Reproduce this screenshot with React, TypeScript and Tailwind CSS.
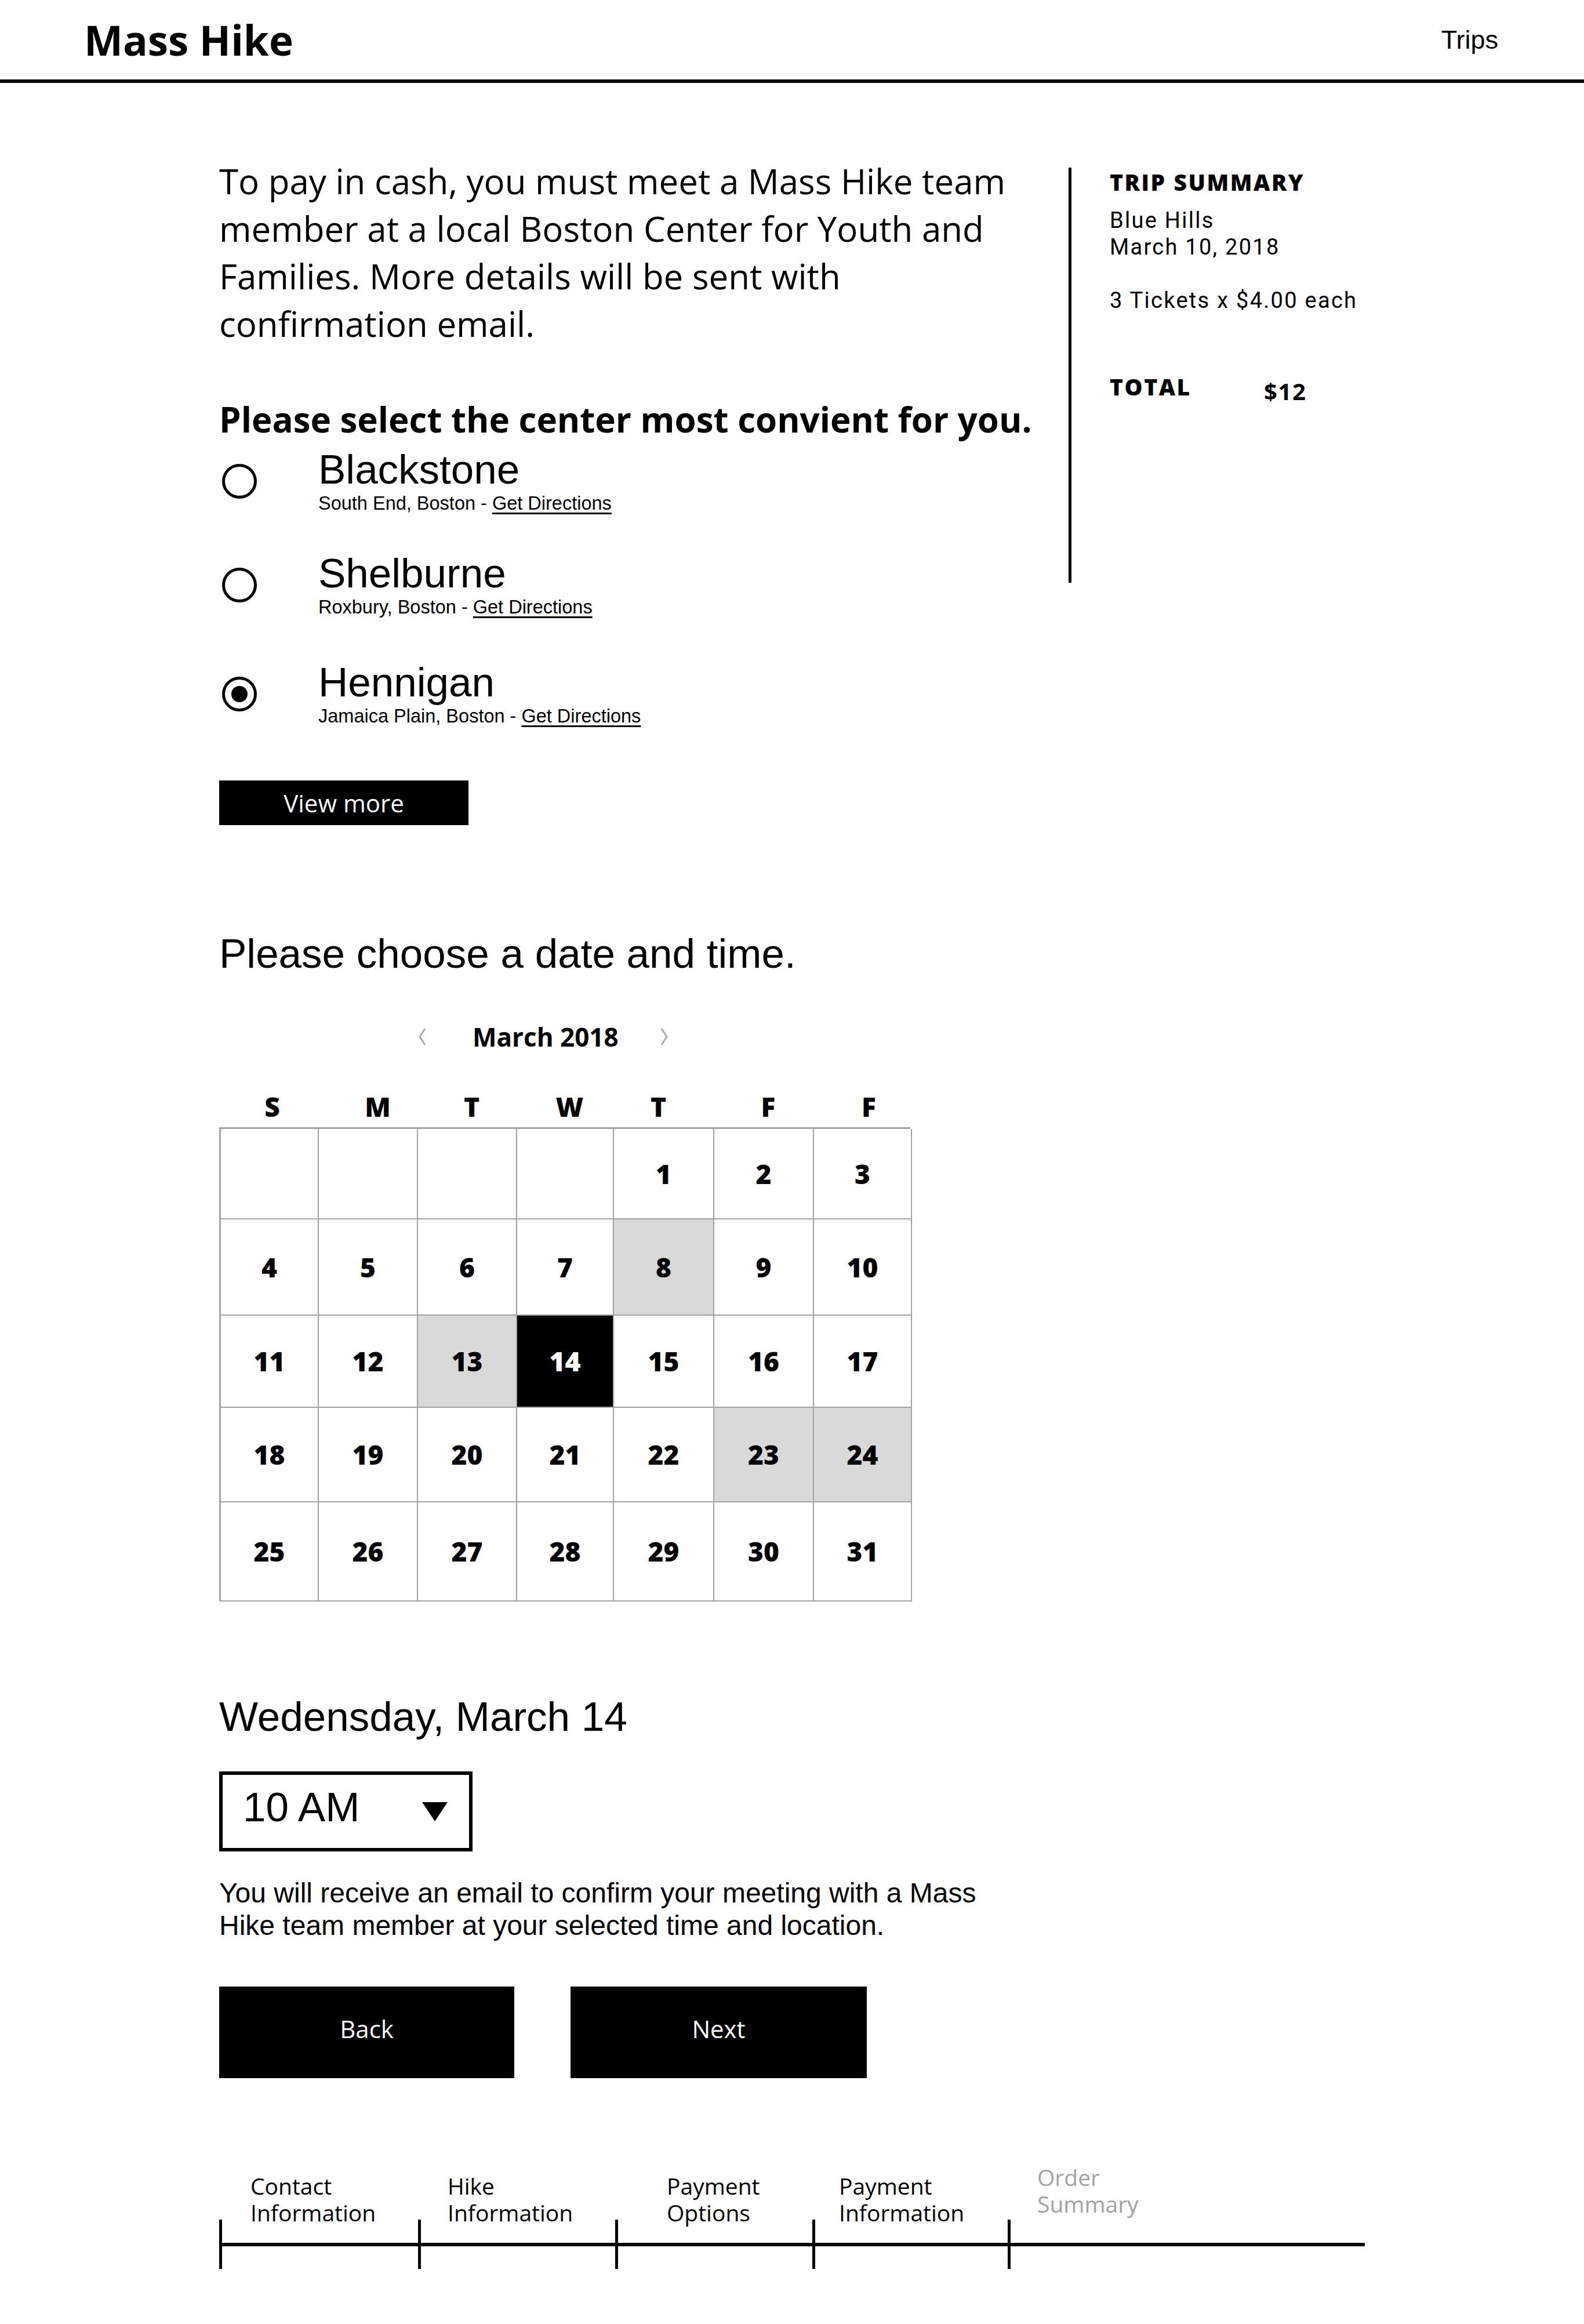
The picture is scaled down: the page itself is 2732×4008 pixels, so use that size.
import React from "react";

const days: (number | null)[] = [
  null, null, null, null, 1, 2, 3,
  4, 5, 6, 7, 8, 9, 10,
  11, 12, 13, 14, 15, 16, 17,
  18, 19, 20, 21, 22, 23, 24,
  25, 26, 27, 28, 29, 30, 31,
];

const gray = new Set([8, 13, 23, 24]);
const rowHeights = ["h-[156px]", "h-[166px]", "h-[159px]", "h-[163px]", "h-[171px]"];
const weekdayPad = ["pl-[14px]", "pl-[38px]", "pl-[20px]", "pl-[20px]", "pr-[14px]", "pl-[20px]", "pl-[26px]"];

function Radio({ checked }: { checked?: boolean }) {
  return (
    <span className="ml-[5px] flex size-[60px] shrink-0 items-center justify-center rounded-full border-[5px] border-black">
      {checked && <span className="size-[28px] rounded-full bg-black" />}
    </span>
  );
}

function Center({
  name,
  area,
  checked,
  className,
}: {
  name: string;
  area: string;
  checked?: boolean;
  className?: string;
}) {
  return (
    <div className={"flex items-center " + (className ?? "")}>
      <Radio checked={checked} />
      <div className="ml-[106px] font-['Liberation_Sans',Arial,sans-serif]">
        <div className="text-[71px] leading-[76px]">{name}</div>
        <div className="text-[32.5px] leading-[40px]">
          {area} - <span className="underline underline-offset-[5px]">Get Directions</span>
        </div>
      </div>
    </div>
  );
}

function Chevron({ dir }: { dir: "left" | "right" }) {
  return (
    <svg width="14" height="32" viewBox="0 0 14 32" fill="none">
      {dir === "left" ? (
        <polyline points="12,2 3,16 12,30" stroke="#acacac" strokeWidth="3" />
      ) : (
        <polyline points="2,2 11,16 2,30" stroke="#acacac" strokeWidth="3" />
      )}
    </svg>
  );
}

function Step({
  label1,
  label2,
  width,
  pad,
  muted,
}: {
  label1: string;
  label2: string;
  width: string;
  pad: string;
  muted?: boolean;
}) {
  return (
    <div className={"flex flex-col justify-end " + width}>
      <div
        className={
          "font-['Open_Sans',sans-serif] text-[39px] leading-[46px] " +
          pad +
          (muted ? " text-[#a3a3a3]" : " text-black")
        }
      >
        <div>{label1}</div>
        <div>{label2}</div>
      </div>
      <div className="-mt-[11px] flex h-[85px] items-center border-l-[5px] border-black">
        <div className="h-[6px] w-full bg-black" />
      </div>
    </div>
  );
}

export default function App() {
  return (
    <div className="min-h-[4008px] w-[2732px] bg-white text-black">
      <header className="flex h-[143px] items-center justify-between border-b-[6px] border-black pl-[145px] pr-[148px]">
        <div className="font-['Open_Sans',sans-serif] text-[71px] font-bold leading-none">Mass Hike</div>
        <div className="font-['Liberation_Sans',Arial,sans-serif] text-[45px] leading-none">Trips</div>
      </header>

      <main className="flex pl-[378px]">
        <div className="w-[1465px] pt-[128px]">
          <p className="w-[1410px] font-['Open_Sans',sans-serif] text-[60px] leading-[82px]">
            To pay in cash, you must meet a Mass Hike team member at a local Boston Center for Youth and
            Families. More details will be sent with confirmation email.
          </p>
          <h2 className="mt-[84px] whitespace-nowrap font-['Open_Sans',sans-serif] text-[60px] font-bold leading-[80px]">
            Please select the center most convient for you.
          </h2>

          <Center className="mt-[9px]" name="Blackstone" area="South End, Boston" />
          <Center className="mt-[63px]" name="Shelburne" area="Roxbury, Boston" />
          <Center className="mt-[72px]" name="Hennigan" area="Jamaica Plain, Boston" checked />

          <button className="mt-[91px] flex h-[77px] w-[430px] items-center justify-center bg-black font-['Open_Sans',sans-serif] text-[42px] text-white">
            View more
          </button>

          <h2 className="mt-[182px] font-['Liberation_Sans',Arial,sans-serif] text-[71px] leading-[80px]">
            Please choose a date and time.
          </h2>

          <div className="mt-[73px] flex h-[60px] items-center">
            <div className="ml-[343px]">
              <Chevron dir="left" />
            </div>
            <div className="ml-[80px] font-['Open_Sans',sans-serif] text-[44px] font-bold">March 2018</div>
            <div className="ml-[72px]">
              <Chevron dir="right" />
            </div>
          </div>

          <div className="mt-[60px] grid w-[1192px] grid-cols-[169px_171px_171px_167px_173px_172px_169px] text-center font-['Open_Sans',sans-serif] text-[46px] font-extrabold leading-[60px]">
            {["S", "M", "T", "W", "T", "F", "F"].map((d, i) => (
              <div key={i} className={weekdayPad[i]}>
                {d}
              </div>
            ))}
          </div>

          <div className="mt-[6px] grid w-[1192px] grid-cols-[169px_171px_171px_167px_173px_172px_169px] border-l-[3px] border-t-[3px] border-[#a3a3a3]">
            {days.map((d, i) => {
              const isSel = d === 14;
              const isGray = d !== null && gray.has(d);
              return (
                <div
                  key={i}
                  className={
                    "flex items-center justify-center border-b-[2px] border-r-[2px] border-[#a3a3a3] font-['Open_Sans',sans-serif] text-[46px] font-extrabold " +
                    rowHeights[Math.floor(i / 7)] +
                    " " +
                    (isSel ? "bg-black text-white" : isGray ? "bg-[#d9d9d9]" : "bg-white")
                  }
                >
                  {d ?? ""}
                </div>
              );
            })}
          </div>

          <h2 className="mt-[159px] font-['Liberation_Sans',Arial,sans-serif] text-[71px] leading-[80px]">
            Wedensday, March 14
          </h2>

          <div className="mt-[54px] flex h-[138px] w-[437px] items-center justify-between border-[6px] border-black pl-[35px] pr-[37px]">
            <span className="mb-[16px] font-['Liberation_Sans',Arial,sans-serif] text-[71px] leading-none">10 AM</span>
            <svg width="44" height="33" viewBox="0 0 44 33">
              <polygon points="0,0 44,0 22,33" fill="black" />
            </svg>
          </div>

          <p className="mt-[44px] w-[1340px] font-['Liberation_Sans',Arial,sans-serif] text-[48px] leading-[56px]">
            You will receive an email to confirm your meeting with a Mass Hike team member at your selected
            time and location.
          </p>

          <div className="mt-[77px] flex gap-[97px]">
            <button className="flex h-[158px] w-[509px] items-center justify-center bg-black pb-[14px] font-['Open_Sans',sans-serif] text-[42px] text-white">
              Back
            </button>
            <button className="flex h-[158px] w-[511px] items-center justify-center bg-black pb-[14px] font-['Open_Sans',sans-serif] text-[42px] text-white">
              Next
            </button>
          </div>

          <div className="mt-[148px] flex w-[1976px] items-end">
            <Step label1="Contact" label2="Information" width="w-[343px]" pad="pl-[54px]" />
            <Step label1="Hike" label2="Information" width="w-[340px]" pad="pl-[51px]" />
            <Step label1="Payment" label2="Options" width="w-[340px]" pad="pl-[89px]" />
            <Step label1="Payment" label2="Information" width="w-[337px]" pad="pl-[46px]" />
            <Step label1="Order" label2="Summary" width="w-[616px]" pad="pl-[51px] pb-[15px]" muted />
          </div>
        </div>

        <aside className="mt-[146px] h-[716px] border-l-[5px] border-black pl-[66px]">
          <div className="pt-[2px] font-['Open_Sans',sans-serif] text-[39px] font-extrabold leading-[46px] tracking-[0.065em]">
            TRIP SUMMARY
          </div>
          <div className="mt-[20px] font-[Roboto,sans-serif] text-[38px] leading-[46px] tracking-[0.06em]">
            <div>Blue Hills</div>
            <div>March 10, 2018</div>
            <div className="mt-[46px]">3 Tickets x $4.00 each</div>
          </div>
          <div className="mt-[103px] flex">
            <div className="w-[266px] font-['Open_Sans',sans-serif] text-[39px] font-extrabold leading-[46px] tracking-[0.065em]">
              TOTAL
            </div>
            <div className="pt-[8px] font-['Open_Sans',sans-serif] text-[40px] font-bold leading-[46px] tracking-[0.04em]">
              $12
            </div>
          </div>
        </aside>
      </main>
    </div>
  );
}
